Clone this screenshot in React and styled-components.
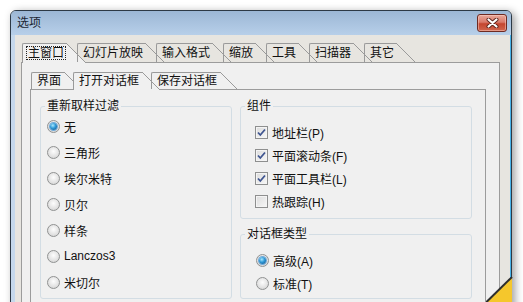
import React from 'react';
import styled, { createGlobalStyle } from 'styled-components';

const Global = createGlobalStyle`
  html, body { margin: 0; padding: 0; background: #fff; overflow: hidden; }
  body {
    font-family: "Liberation Sans", "Noto Sans CJK SC", sans-serif;
    font-size: 12px;
    color: #111;
  }
`;

const Stage = styled.div`
  position: relative;
  width: 523px;
  height: 302px;
  overflow: hidden;
  box-sizing: border-box;
  padding: 10px 0 0 10px;
`;

const Window = styled.div`
  width: 502px;
  box-sizing: border-box;
  border: 1px solid #2d3945;
  border-radius: 6px 6px 0 0;
  background: #c5d8ec;
  box-shadow: 3px 2px 9px rgba(0, 0, 0, 0.38);
  overflow: hidden;
`;

const TitleBar = styled.div`
  height: 24px;
  display: flex;
  align-items: flex-start;
  justify-content: space-between;
  padding: 0 4px 0 6px;
  background: linear-gradient(#9cb7d5, #b7cfe9);
`;

const Title = styled.span`
  line-height: 24px;
  font-size: 12px;
  color: #1c2633;
`;

const CloseButton = styled.div`
  margin-top: 3px;
  width: 30px;
  height: 18px;
  box-sizing: border-box;
  border: 1px solid #6e2a22;
  border-radius: 3px;
  background: linear-gradient(#e9a89a 0%, #d9796a 45%, #c4452f 55%, #d0664e 100%);
  box-shadow: inset 0 0 0 1px rgba(255, 220, 210, 0.45);
  display: flex;
  align-items: center;
  justify-content: center;
`;

const Frame = styled.div`
  border-left: 4px solid #c5d8ec;
  border-right: 1px solid #47b2e8;
`;

const Client = styled.div`
  background: #e7e5e0;
  padding: 8px 10px 0 6px;
  height: 280px;
  box-sizing: border-box;
`;

const TabBar = styled.div`
  position: relative;
  z-index: 1;
  display: flex;
  align-items: flex-end;
  height: ${p => p.$h}px;
  padding-left: 1px;
`;

const Tab = styled.div`
  position: relative;
  box-sizing: border-box;
  height: ${p => p.$h + (p.$active ? 1 : 0)}px;
  margin-bottom: ${p => (p.$active ? -1 : 0)}px;
  margin-right: ${p => p.$gap}px;
  padding: 0 ${p => p.$pr}px 0 5px;
  border-left: 1px solid #9a9a9a;
  border-top: 1px solid #9a9a9a;
  border-top-left-radius: 2px;
  background: ${p => (p.$active ? '#f0f0f0' : 'transparent')};
  line-height: ${p => p.$h - 1}px;
  white-space: nowrap;
  color: #111;

  &::after {
    content: '';
    position: absolute;
    left: 100%;
    top: -1px;
    width: ${p => p.$h + (p.$active ? 1 : 0)}px;
    height: ${p => p.$h + (p.$active ? 1 : 0)}px;
    background: linear-gradient(
      to top right,
      ${p => (p.$active ? '#f0f0f0' : 'transparent')} 0,
      ${p => (p.$active ? '#f0f0f0' : 'transparent')} calc(50% - 0.6px),
      #9a9a9a calc(50% - 0.6px),
      #9a9a9a calc(50% + 0.6px),
      transparent calc(50% + 0.6px)
    );
  }
`;

const TabLabel = styled.span`
  display: inline-block;
  line-height: 12px;
  padding: 0 1px;
  margin-left: -1px;
  outline: ${p => (p.$focus ? '1px dotted #222' : 'none')};
  outline-offset: 0;
`;

const OuterPanel = styled.div`
  background: #f0f0f0;
  border: 1px solid #9c9c9c;
  padding: 9px 13px 0 8px;
  height: 260px;
  box-sizing: border-box;
`;

const InnerPanel = styled.div`
  background: #f0f0f0;
  border: 1px solid #9c9c9c;
  padding: 9px 13px 0 9px;
  height: 240px;
  box-sizing: border-box;
  display: flex;
  gap: 8px;
  align-items: flex-start;
`;

const Column = styled.div`
  display: flex;
  flex-direction: column;
  gap: 8px;
`;

const Group = styled.fieldset`
  margin: 0;
  padding: 0;
  box-sizing: border-box;
  width: ${p => p.$w}px;
  height: ${p => p.$h}px;
  border: 1px solid #d3dde4;
  border-radius: 3px;
  min-inline-size: auto;
`;

const Legend = styled.legend`
  padding: 0 2px;
  margin-left: 4px;
  line-height: 14px;
  font-size: 12px;
  color: #111;
`;

const ItemList = styled.div`
  display: flex;
  flex-direction: column;
  padding: ${p => p.$pt}px 0 0 ${p => p.$pl}px;
`;

const Row = styled.div`
  display: flex;
  align-items: center;
  gap: 4px;
  height: ${p => p.$h}px;
  color: #111;
  white-space: nowrap;
`;

const Radio = styled.span`
  flex: none;
  width: 13px;
  height: 13px;
  box-sizing: border-box;
  border-radius: 50%;
  border: 1px solid #909292;
  background: radial-gradient(circle at 50% 40%, #fdfdfd 0%, #e4e4e4 55%, #cdcdcd 100%);
  display: flex;
  align-items: center;
  justify-content: center;

  &::after {
    content: '';
    display: ${p => (p.$checked ? 'block' : 'none')};
    width: 7px;
    height: 7px;
    border-radius: 50%;
    background: radial-gradient(circle at 40% 35%, #a8e8ff 0%, #2e98d6 45%, #0e4c86 100%);
    box-shadow: 0 0 0 1px #6fa9d8;
  }
`;

const Check = styled.span`
  flex: none;
  width: 13px;
  height: 13px;
  box-sizing: border-box;
  border: 1px solid #8e8f8f;
  background: linear-gradient(135deg, #dcdcdc, #f7f7f7);
  box-shadow: inset 0 0 0 1px #f4f4f4;
  display: flex;
  align-items: center;
  justify-content: center;
`;

const Corner = styled.svg`
  position: absolute;
  left: 486px;
  top: 277px;
`;

function CloseGlyph() {
  return (
    <svg width="13" height="10" viewBox="0 0 13 10">
      <path d="M2.5 1.5 L10.5 8.5 M10.5 1.5 L2.5 8.5" stroke="#5b231b" strokeWidth="4" strokeLinecap="round" />
      <path d="M2.5 1.5 L10.5 8.5 M10.5 1.5 L2.5 8.5" stroke="#ffffff" strokeWidth="2.2" strokeLinecap="round" />
    </svg>
  );
}

function CheckMark() {
  return (
    <svg width="11" height="11" viewBox="0 0 11 11">
      <path d="M2 5.5 L4.3 8 L9 2.5" fill="none" stroke="#3f5590" strokeWidth="1.8" />
    </svg>
  );
}

const outerTabs = ['主窗口', '幻灯片放映', '输入格式', '缩放', '工具', '扫描器', '其它'];
const innerTabs = ['界面', '打开对话框', '保存对话框'];
const filters = ['无', '三角形', '埃尔米特', '贝尔', '样条', 'Lanczos3', '米切尔'];
const parts = [
  ['地址栏(P)', true],
  ['平面滚动条(F)', true],
  ['平面工具栏(L)', true],
  ['热跟踪(H)', false],
];
const kinds = [
  ['高级(A)', true],
  ['标准(T)', false],
];

export default function App() {
  return (
    <>
      <Global />
      <Stage>
        <Window>
          <TitleBar>
            <Title>选项</Title>
            <CloseButton>
              <CloseGlyph />
            </CloseButton>
          </TitleBar>
          <Frame>
            <Client>
              <TabBar $h={19}>
                {outerTabs.map((t, i) => (
                  <Tab key={t} $h={19} $gap={11} $pr={1} $active={i === 0}>
                    <TabLabel $focus={i === 0}>{t}</TabLabel>
                  </Tab>
                ))}
              </TabBar>
              <OuterPanel>
                <TabBar $h={17}>
                  {innerTabs.map((t, i) => (
                    <Tab key={t} $h={17} $gap={9} $pr={2} $active={i === 1}>
                      <TabLabel>{t}</TabLabel>
                    </Tab>
                  ))}
                </TabBar>
                <InnerPanel>
                  <Group $w={192} $h={200}>
                    <Legend>重新取样过滤</Legend>
                    <ItemList $pt={0} $pl={6}>
                      {filters.map((f, i) => (
                        <Row key={f} $h={26}>
                          <Radio $checked={i === 0} />
                          <span>{f}</span>
                        </Row>
                      ))}
                    </ItemList>
                  </Group>
                  <Column>
                    <Group $w={232} $h={120}>
                      <Legend>组件</Legend>
                      <ItemList $pt={8} $pl={14}>
                        {parts.map(([label, on]) => (
                          <Row key={label} $h={23}>
                            <Check>{on && <CheckMark />}</Check>
                            <span>{label}</span>
                          </Row>
                        ))}
                      </ItemList>
                    </Group>
                    <Group $w={232} $h={72}>
                      <Legend>对话框类型</Legend>
                      <ItemList $pt={8} $pl={15}>
                        {kinds.map(([label, on]) => (
                          <Row key={label} $h={23}>
                            <Radio $checked={on} />
                            <span>{label}</span>
                          </Row>
                        ))}
                      </ItemList>
                    </Group>
                  </Column>
                </InnerPanel>
              </OuterPanel>
            </Client>
          </Frame>
        </Window>
        <Corner width="27" height="25" viewBox="0 0 27 25">
          <polygon points="1,25 26,0 26,25" fill="#f5c72c" />
          <line x1="0" y1="25.5" x2="26" y2="0" stroke="#2e2e2e" strokeWidth="2" />
        </Corner>
      </Stage>
    </>
  );
}
